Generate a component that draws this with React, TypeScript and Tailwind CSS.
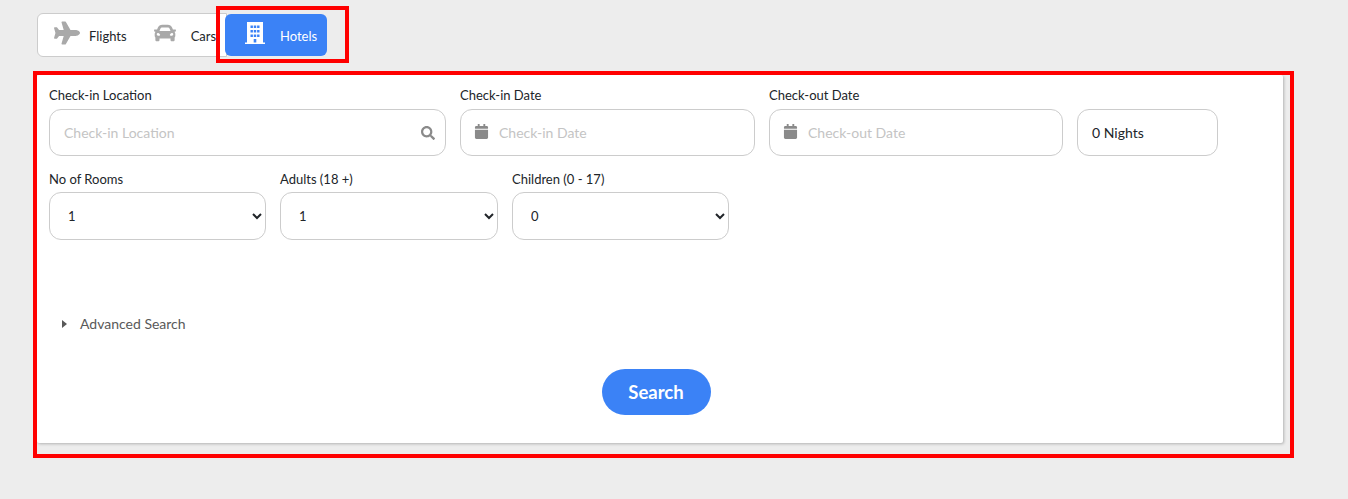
import React from 'react';
import { FaCalendar, FaCar, FaPlane, FaSearch } from 'react-icons/fa';

function HotelIcon() {
  return (
    <svg width="20" height="22" viewBox="0 0 20 22" className="block">
      <path
        fill="white"
        fillRule="evenodd"
        d="M2 0h16v20.500h2V22H0v-1.500h2zM5.500 3.500v2.500h2.400V3.500zM8.800 3.500v2.500h2.400V3.500zM12.100 3.500v2.500h2.400V3.500zM5.500 8v2.500h2.400V8zM8.800 8v2.500h2.400V8zM12.100 8v2.500h2.400V8zM5.500 12.500v2.500h2.400v-2.500zM8.800 12.500v2.500h2.400v-2.500zM12.100 12.500v2.500h2.400v-2.500zM8.700 17v3.500h2.600V17z"
      />
    </svg>
  );
}

function TextField({ label, placeholder, width, icon }: { label: string; placeholder: string; width: string; icon?: 'search' | 'date' }) {
  return (
    <div className={width}>
      <label className="block text-[13px] leading-[20px] text-[#212529] mb-[4px]">{label}</label>
      <div className="flex items-center h-[47px] border border-[#ccc] rounded-[12px] bg-white px-[14px]">
        {icon === 'date' && <FaCalendar className="text-[#8a8a8a] text-[15px] -ml-[1px] mr-[10px] shrink-0 -mt-[2px]" />}
        <input
          placeholder={placeholder}
          className="w-full min-w-0 text-[14px] outline-none placeholder:text-[#c4c4c4] bg-transparent"
        />
        {icon === 'search' && <FaSearch className="text-[#8a8a8a] text-[14px] shrink-0 -mr-[4px]" />}
      </div>
    </div>
  );
}

function SelectField({ label, value, options, width }: { label: string; value: string; options: string[]; width: string }) {
  return (
    <div className={width}>
      <label className="block text-[13px] leading-[20px] text-[#212529] mb-[3px]">{label}</label>
      <select
        defaultValue={value}
        className="block w-full h-[48px] border border-[#ccc] rounded-[12px] bg-white pl-[14px] pr-[8px] text-[13px] text-[#212529] font-['Lato',sans-serif] outline-none"
      >
        {options.map((o) => (
          <option key={o}>{o}</option>
        ))}
      </select>
    </div>
  );
}

export default function App() {
  return (
    <div className="relative h-[499px] w-[1348px] overflow-hidden bg-[#ededed] font-['Lato',sans-serif]">
      <div className="pl-[37px] pt-[13px]">
        <div className="flex items-center w-[290px] h-[44px]">
          <div className="flex items-center w-[190px] h-[44px] bg-white border border-[#ccc] rounded-l-[6px] shrink-0 overflow-hidden">
            <FaPlane className="text-[#a9a9a9] text-[26px] ml-[16px] shrink-0 -mt-[4px]" />
            <span className="ml-[9px] mt-[4px] text-[13px] text-[#212529]">Flights</span>
            <FaCar className="text-[#a9a9a9] text-[22px] ml-[27px] shrink-0 -mt-[4px]" />
            <span className="ml-[15px] mt-[4px] text-[13px] text-[#212529]">Cars</span>
          </div>
          <button className="flex items-center w-[102px] h-[42px] -ml-[2px] shrink-0 rounded-[6px] bg-[#3b82f6] pl-[20px] text-[13px] text-white">
            <span className="-mt-[5px]">
              <HotelIcon />
            </span>
            <span className="ml-[15px] mt-[4px]">Hotels</span>
          </button>
        </div>
      </div>

      <div className="ml-[37px] mt-[18px] w-[1246px] h-[368px] bg-white rounded-[2px] shadow-[1px_1px_3px_rgba(0,0,0,0.25)] pl-[12px] pt-[10px]">
        <div className="flex gap-[14px]">
          <TextField label="Check-in Location" placeholder="Check-in Location" width="w-[397px]" icon="search" />
          <TextField label="Check-in Date" placeholder="Check-in Date" width="w-[295px]" icon="date" />
          <TextField label="Check-out Date" placeholder="Check-out Date" width="w-[294px]" icon="date" />
          <div className="w-[141px] pt-[24px]">
            <div className="flex items-center h-[47px] border border-[#ccc] rounded-[12px] px-[14px] text-[14px] text-[#212529]">0 Nights</div>
          </div>
        </div>

        <div className="flex gap-[14px] mt-[13px]">
          <SelectField label="No of Rooms" value="1" options={['1', '2', '3', '4']} width="w-[217px]" />
          <SelectField label="Adults (18 +)" value="1" options={['1', '2', '3', '4']} width="w-[218px]" />
          <SelectField label="Children (0 - 17)" value="0" options={['0', '1', '2', '3']} width="w-[217px]" />
        </div>

        <div className="flex items-center mt-[74px] pl-[13px] text-[14px] leading-[20px] text-[#595959]">
          <span className="w-0 h-0 border-y-[4px] border-y-transparent border-l-[5px] border-l-[#595959] mr-[13px]" />
          Advanced Search
        </div>

        <div className="flex justify-center mt-[35px] pr-[20px]">
          <button className="w-[109px] h-[46px] pt-[1px] rounded-full bg-[#3b82f6] text-[18.5px] font-bold text-white">Search</button>
        </div>
      </div>

      {/* red annotation boxes drawn on the screenshot */}
      <div className="absolute left-[216px] top-[6px] w-[133px] h-[57px] border-[4px] border-[#ff0000]" />
      <div className="absolute left-[33px] top-[71px] w-[1261px] h-[387px] border-[4px] border-[#ff0000]" />
    </div>
  );
}
